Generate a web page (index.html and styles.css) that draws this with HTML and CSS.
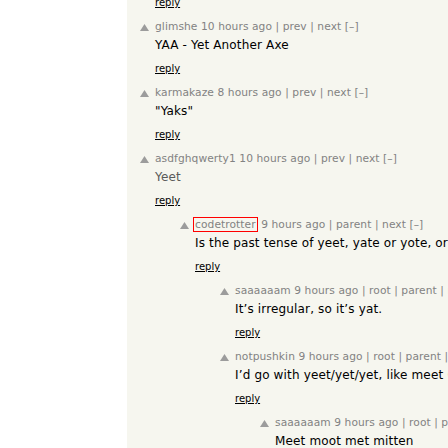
FILE: index.html
```html
<!DOCTYPE html>
<html>
<head>
<meta charset="utf-8">
<link rel="stylesheet" href="styles.css">
</head>
<body>
<div class="page">
  <div class="gutter"></div>
  <div class="main">
    <div class="thread">
      <div class="comment first">
        <div class="ind" style="width:0px"></div>
        <div class="vote"></div>
        <div class="body">
          <div class="reply"><a href="#">reply</a></div>
        </div>
      </div>

      <div class="comment">
        <div class="ind" style="width:0px"></div>
        <div class="vote"><svg class="arrow" width="9" height="7" viewBox="0 0 9 7"><polygon points="4.5,0 9,7 0,7"/></svg></div>
        <div class="body">
          <div class="head"><span class="user">glimshe</span> <span>10 hours ago</span> | <span>prev</span> | <span>next</span> [–]</div>
          <div class="text">YAA - Yet Another Axe</div>
          <div class="reply"><a href="#">reply</a></div>
        </div>
      </div>

      <div class="comment">
        <div class="ind" style="width:0px"></div>
        <div class="vote"><svg class="arrow" width="9" height="7" viewBox="0 0 9 7"><polygon points="4.5,0 9,7 0,7"/></svg></div>
        <div class="body">
          <div class="head"><span class="user">karmakaze</span> <span>8 hours ago</span> | <span>prev</span> | <span>next</span> [–]</div>
          <div class="text">"Yaks"</div>
          <div class="reply"><a href="#">reply</a></div>
        </div>
      </div>

      <div class="comment">
        <div class="ind" style="width:0px"></div>
        <div class="vote"><svg class="arrow" width="9" height="7" viewBox="0 0 9 7"><polygon points="4.5,0 9,7 0,7"/></svg></div>
        <div class="body">
          <div class="head"><span class="user">asdfghqwerty1</span> <span>10 hours ago</span> | <span>prev</span> | <span>next</span> [–]</div>
          <div class="text faded">Yeet</div>
          <div class="reply"><a href="#">reply</a></div>
        </div>
      </div>

      <div class="comment">
        <div class="ind" style="width:40px"></div>
        <div class="vote"><svg class="arrow" width="9" height="7" viewBox="0 0 9 7"><polygon points="4.5,0 9,7 0,7"/></svg></div>
        <div class="body">
          <div class="head"><span class="user boxed">codetrotter</span> <span>9 hours ago</span> | <span>parent</span> | <span>next</span> [–]</div>
          <div class="text">Is the past tense of yeet, yate or yote, or yeeted?</div>
          <div class="reply"><a href="#">reply</a></div>
        </div>
      </div>

      <div class="comment">
        <div class="ind" style="width:80px"></div>
        <div class="vote"><svg class="arrow" width="9" height="7" viewBox="0 0 9 7"><polygon points="4.5,0 9,7 0,7"/></svg></div>
        <div class="body">
          <div class="head"><span class="user">saaaaaam</span> <span>9 hours ago</span> | <span>root</span> | <span>parent</span> | <span>next</span> [–]</div>
          <div class="text">It’s irregular, so it’s yat.</div>
          <div class="reply"><a href="#">reply</a></div>
        </div>
      </div>

      <div class="comment">
        <div class="ind" style="width:80px"></div>
        <div class="vote"><svg class="arrow" width="9" height="7" viewBox="0 0 9 7"><polygon points="4.5,0 9,7 0,7"/></svg></div>
        <div class="body">
          <div class="head"><span class="user">notpushkin</span> <span>9 hours ago</span> | <span>root</span> | <span>parent</span> | <span>next</span> [–]</div>
          <div class="text">I’d go with yeet/yet/yet, like meet (met/met).</div>
          <div class="reply"><a href="#">reply</a></div>
        </div>
      </div>

      <div class="comment">
        <div class="ind" style="width:120px"></div>
        <div class="vote"><svg class="arrow" width="9" height="7" viewBox="0 0 9 7"><polygon points="4.5,0 9,7 0,7"/></svg></div>
        <div class="body">
          <div class="head"><span class="user">saaaaaam</span> <span>9 hours ago</span> | <span>root</span> | <span>parent</span> | <span>next</span> [–]</div>
          <div class="text">Meet moot met mitten</div>
          <div class="reply"><a href="#">reply</a></div>
        </div>
      </div>
    </div>
  </div>
</div>
</body>
</html>
```

FILE: styles.css
```css
html, body {
  margin: 0;
  padding: 0;
  width: 448px;
  height: 448px;
  overflow: hidden;
  background: #ffffff;
}

.page {
  display: flex;
  width: 900px;
  height: 448px;
  font-family: "DejaVu Sans", Verdana, sans-serif;
}

.gutter {
  width: 127px;
  flex: none;
  background: #ffffff;
}

.main {
  flex: 1;
  background: #f6f6ef;
  padding-left: 13px;
}

.thread {
  display: flex;
  flex-direction: column;
  margin-top: -11px;
}

.comment {
  display: flex;
  flex-direction: row;
  margin-bottom: 1px;
}

.ind {
  flex: none;
}

.vote {
  width: 15px;
  flex: none;
}

.arrow {
  display: block;
  margin-top: 7px;
  fill: #9c9c9c;
}

.body {
  display: flex;
  flex-direction: column;
  white-space: nowrap;
}

.head {
  font-size: 10.67px;
  line-height: 19px;
  height: 19px;
  color: #828282;
  letter-spacing: 0.08px;
}

.boxed {
  border: 1px solid #ff0000;
  padding: 0 1px;
  margin-left: -2px;
}

.text {
  font-size: 12px;
  line-height: 19px;
  height: 19px;
  color: #000000;
  letter-spacing: 0.15px;
}

.text.faded {
  color: #5a5a5a;
}

.reply {
  font-size: 10px;
  line-height: 27px;
  height: 27px;
}

.reply a {
  color: #000000;
  text-decoration: underline;
}
```
